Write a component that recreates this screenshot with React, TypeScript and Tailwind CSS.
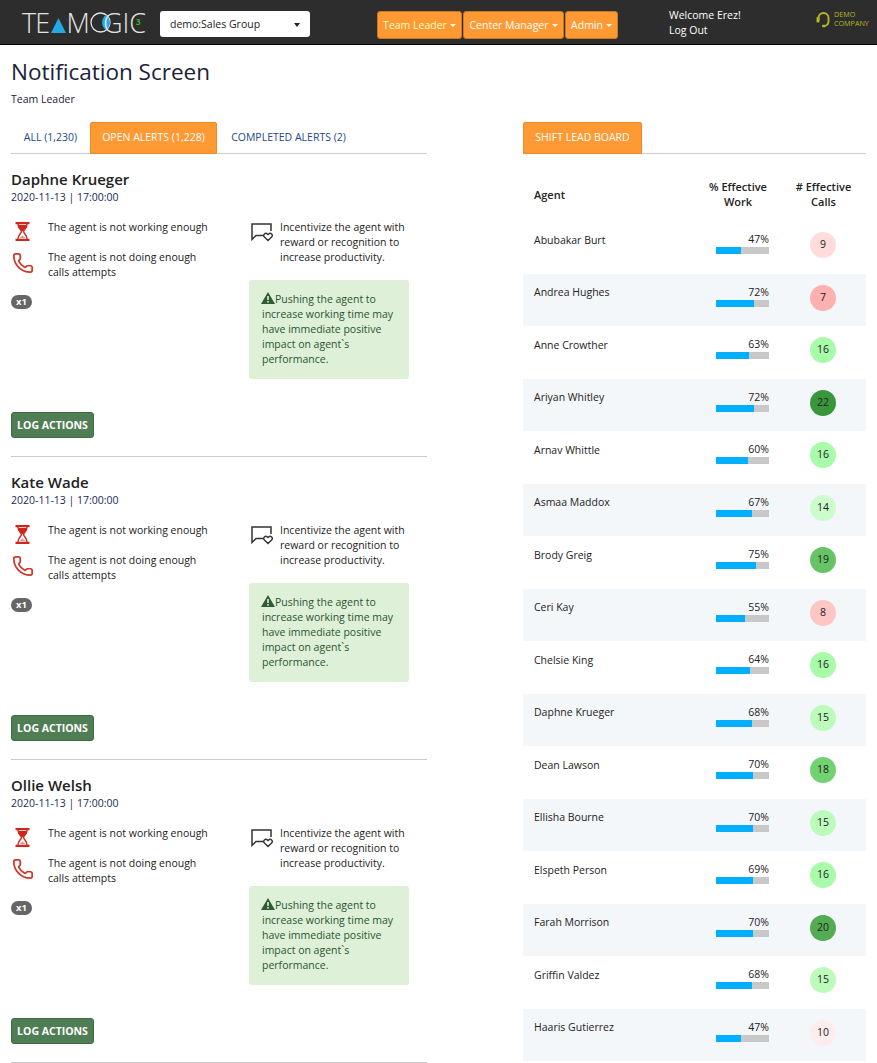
import { Phone } from "lucide-react";

const font = { fontFamily: '"Open Sans", "Liberation Sans", sans-serif' };

const rows: [string, number, number, string][] = [
  ["Abubakar Burt", 47, 9, "bg-[#ffdcdc]"],
  ["Andrea Hughes", 72, 7, "bg-[#ffb0b0]"],
  ["Anne Crowther", 63, 16, "bg-[#a8fba8]"],
  ["Ariyan Whitley", 72, 22, "bg-[#3a963a]"],
  ["Arnav Whittle", 60, 16, "bg-[#a8fba8]"],
  ["Asmaa Maddox", 67, 14, "bg-[#ccfccc]"],
  ["Brody Greig", 75, 19, "bg-[#66c466]"],
  ["Ceri Kay", 55, 8, "bg-[#ffc6c6]"],
  ["Chelsie King", 64, 16, "bg-[#a8fba8]"],
  ["Daphne Krueger", 68, 15, "bg-[#bcfbbc]"],
  ["Dean Lawson", 70, 18, "bg-[#72d272]"],
  ["Ellisha Bourne", 70, 15, "bg-[#bcfbbc]"],
  ["Elspeth Person", 69, 16, "bg-[#a8fba8]"],
  ["Farah Morrison", 70, 20, "bg-[#52ad52]"],
  ["Griffin Valdez", 68, 15, "bg-[#bcfbbc]"],
  ["Haaris Gutierrez", 47, 10, "bg-[#ffecec]"],
];

function Hourglass() {
  return (
    <svg width="15" height="19" viewBox="0 0 15 19" className="block">
      <path d="M0.5 1.2h14M0.5 17.8h14" stroke="#d0261c" strokeWidth="2.2" fill="none" />
      <path d="M3 2c0 4.5 3.4 5.5 3.4 7.5S3 12.5 3 17M12 2c0 4.5-3.4 5.5-3.4 7.5S12 12.5 12 17" stroke="#d0261c" strokeWidth="1.4" fill="none" />
      <path d="M3.4 3h8.2v2.2L7.5 9.5 3.4 5.2z" fill="#d0261c" />
      <path d="M4.5 16l3-2.6 3 2.6z" fill="#e8948e" />
    </svg>
  );
}

function ChatHeart() {
  return (
    <svg width="24" height="20" viewBox="0 0 24 20" className="block">
      <path d="M13 13.5H6L2 17.5V2h19v7" stroke="#333" strokeWidth="1.5" fill="none" />
      <path d="M18 18.5l-3.6-3.6a2.1 2.1 0 0 1 3-3l.6.6.6-.6a2.1 2.1 0 0 1 3 3z" stroke="#333" strokeWidth="1.4" fill="none" />
    </svg>
  );
}

function Warn() {
  return (
    <svg width="14" height="12" viewBox="0 0 14 12" className="-ml-[1px] inline-block align-[-1px]">
      <path d="M7 0l7 12H0z" fill="#2f5d33" />
      <rect x="6.2" y="4" width="1.6" height="4" fill="#dff0d8" />
      <rect x="6.2" y="9" width="1.6" height="1.6" fill="#dff0d8" />
    </svg>
  );
}

function Caret() {
  return <span className="ml-[3px] inline-block align-middle border-x-[3px] border-t-[3px] border-x-transparent border-t-white" />;
}

function Logo() {
  return (
    <div
      className="relative ml-[22px] flex h-[44px] w-[124px] items-center text-[27px] leading-none text-[#e4e4e4] tracking-[-0.8px]"
      style={{ fontFamily: '"Open Sans", sans-serif', fontWeight: 300 }}
    >
      <span>TE</span>
      <svg width="15" height="15" viewBox="0 0 15 15" className="ml-[2px] mt-[7px]"><path d="M7.5 0L15 15H0z" fill="#22a9e6" /></svg>
      <span>M</span>
      <svg width="21" height="21" viewBox="0 0 21 21" className="ml-[1px] overflow-visible">
        <circle cx="10.5" cy="10.5" r="9.5" stroke="#e4e4e4" strokeWidth="1.3" fill="none" />
        <path d="M16 2.8a9.5 9.5 0 0 1 0 15.4a9.5 9.5 0 0 1 0-15.4z" fill="#22a9e6" />
      </svg>
      <span className="-ml-[8px] tracking-[0px]">GIC</span>
      <span className="absolute left-[114px] top-[17px] text-[8px] leading-[10px] font-bold tracking-normal text-[#22c022]">3</span>
    </div>
  );
}

function Card({ name }: { name: string }) {
  const body = "text-[10.5px] leading-[15px] text-[#222]";
  return (
    <div className="h-[303px] border-b border-[#ccc]">
      <div className="pt-[15px] pb-[1px] text-[15px] leading-[20px] font-semibold text-[#222]">{name}</div>
      <div className="text-[10.5px] leading-[15px] text-[#1a2a5a]">2020-11-13 | 17:00:00</div>
      <div className="mt-[15px] flex h-[160px]">
        <div className="w-[238px]">
          <div className="flex h-[22px]">
            <div className="flex w-[37px] justify-start pl-[4px] pt-[2px]"><Hourglass /></div>
            <div className={`w-[170px] ${body}`}>The agent is not working enough</div>
          </div>
          <div className="mt-[8px] flex">
            <div className="w-[37px] pl-[1px] pt-[2px]"><Phone size={22} strokeWidth={1.9} className="text-[#d2342a]" /></div>
            <div className={`w-[170px] ${body}`}>The agent is not doing enough calls attempts</div>
          </div>
          <span className="mt-[15px] inline-block h-[14px] w-[21px] rounded-full bg-[#666] text-center text-[9.5px] leading-[14px] font-bold text-white">x1</span>
        </div>
        <div className="w-[160px]">
          <div className="flex">
            <div className="w-[31px] pl-[1px] pt-[2px]"><ChatHeart /></div>
            <div className={`flex-1 ${body}`}>Incentivize the agent with reward or recognition to increase productivity.</div>
          </div>
          <div className="mt-[15px] h-[99px] rounded-[3px] bg-[#dff0d8] pl-[13px] pr-[11px] py-[12px] text-[10.5px] leading-[15px] text-[#2a552e]">
            <Warn />Pushing the agent to increase working time may have immediate positive impact on agent`s performance.
          </div>
        </div>
      </div>
      <button className="mt-[32px] block h-[26px] w-[83px] rounded-[3px] border border-[#3d6b42] bg-[#4f7d54] text-center text-[10.5px] leading-[24px] font-bold text-white">LOG ACTIONS</button>
    </div>
  );
}

export default function App() {
  return (
    <div className="h-[1063px] w-[877px] overflow-hidden bg-white" style={font}>
      <header className="flex h-[45px] border-b border-black bg-[#2d2d2d]">
        <Logo />
        <div className="ml-[14px] mt-[11px] flex h-[26px] w-[150px] items-center justify-between rounded-[3px] bg-white pl-[10px] pr-[10px] pt-[1px] text-[10.5px] text-[#222]">
          demo:Sales Group
          <span className="border-x-[3.5px] border-t-[4px] border-x-transparent border-t-[#222]" />
        </div>
        <nav className="ml-[67px] mt-[11px] flex h-[28px] gap-[1px]">
          <button className="h-[28px] w-[85px] rounded-[3px] border border-[#c97a20] bg-[#ff9933] pt-[1px] text-[10.5px] text-[#ffffc0]">Team Leader<Caret /></button>
          <button className="h-[28px] w-[101px] rounded-[3px] border border-[#c97a20] bg-[#ff9933] pt-[1px] text-[10.5px] text-white">Center Manager<Caret /></button>
          <button className="h-[28px] w-[53px] rounded-[3px] border border-[#c97a20] bg-[#ff9933] pt-[1px] text-[10.5px] text-white">Admin<Caret /></button>
        </nav>
        <div className="ml-[51px] mt-[8px] w-[100px] text-[10.5px] leading-[15px] text-white">
          <div>Welcome Erez!</div>
          <div>Log Out</div>
        </div>
        <div className="ml-[47px] mt-[10px] flex h-[18px] items-center gap-[3px] text-[#b5b81e]">
          <svg width="15" height="17" viewBox="0 0 15 17">
            <path d="M2.5 9V7a5 5 0 0 1 10 0v3.5a4.5 4.5 0 0 1-5 4.5" stroke="#b5b81e" strokeWidth="1.9" fill="none" />
            <rect x="0.5" y="6" width="3" height="5.5" rx="1" fill="#b5b81e" />
            <rect x="6" y="13.8" width="3.5" height="2.4" rx="1" fill="#b5b81e" />
          </svg>
          <div className="text-[7.2px] leading-[9px] font-medium">DEMO<br />COMPANY</div>
        </div>
      </header>

      <div className="px-[11px]">
        <h1 className="pt-[12px] text-[22.5px] leading-[30px] font-normal text-[#1a2238]">Notification Screen</h1>
        <div className="mt-[5px] text-[10.5px] leading-[15px] text-[#1a2238]">Team Leader</div>

        <div className="mt-[15px] flex justify-between">
          <div className="w-[416px]">
            <div className="flex h-[32px] border-b border-[#ccc] text-[10.5px]">
              <div className="flex h-[31px] w-[79px] items-center justify-center text-[#23488c]">ALL (1,230)</div>
              <div className="flex h-[32px] w-[127px] items-center justify-center rounded-t-[2px] border border-[#f08a20] bg-[#ff9933] text-white">OPEN ALERTS (1,228)</div>
              <div className="flex h-[31px] w-[143px] items-center justify-center text-[#23488c]">COMPLETED ALERTS (2)</div>
            </div>
            <Card name="Daphne Krueger" />
            <Card name="Kate Wade" />
            <Card name="Ollie Welsh" />
          </div>

          <div className="w-[343px]">
            <div className="flex h-[32px] border-b border-[#ccc] text-[10.5px]">
              <div className="flex h-[32px] w-[119px] items-center justify-center rounded-t-[2px] border border-[#f08a20] bg-[#ff9933] text-white">SHIFT LEAD BOARD</div>
            </div>
            <div className="flex h-[67px] items-center pt-[13px] text-[11px] font-semibold leading-[15px] text-[#222]">
              <div className="w-[182px] pl-[11px]">Agent</div>
              <div className="w-[66px] text-center">% Effective Work</div>
              <div className="w-[88px] pl-[17px] text-center">
                # Effective Calls
              </div>
            </div>
            {rows.map(([n, p, c, bg], i) => (
              <div key={n} className={`flex h-[52.5px] ${i % 2 === 1 ? "bg-[#f4f7fa]" : "bg-white"}`}>
                <div className="w-[193px] pl-[11px] pt-[11.5px] text-[10.5px] leading-[15px] text-[#222]">{n}</div>
                <div className="w-[53px] pt-[11px]">
                  <div className="text-right text-[10.5px] leading-[15px] text-[#222]">{p}%</div>
                  <div className="h-[7px] w-[53px] bg-[#c8c8c8]">
                    <div className="h-full bg-[#00b0ff]" style={{ width: `${p}%` }} />
                  </div>
                </div>
                <div className="flex w-[97px] justify-center pl-[11px] pt-[11px]">
                  <div className={`flex h-[26px] w-[26px] items-center justify-center rounded-full text-[10.5px] text-[#222] ${bg}`}>{c}</div>
                </div>
              </div>
            ))}
          </div>
        </div>
      </div>
    </div>
  );
}
